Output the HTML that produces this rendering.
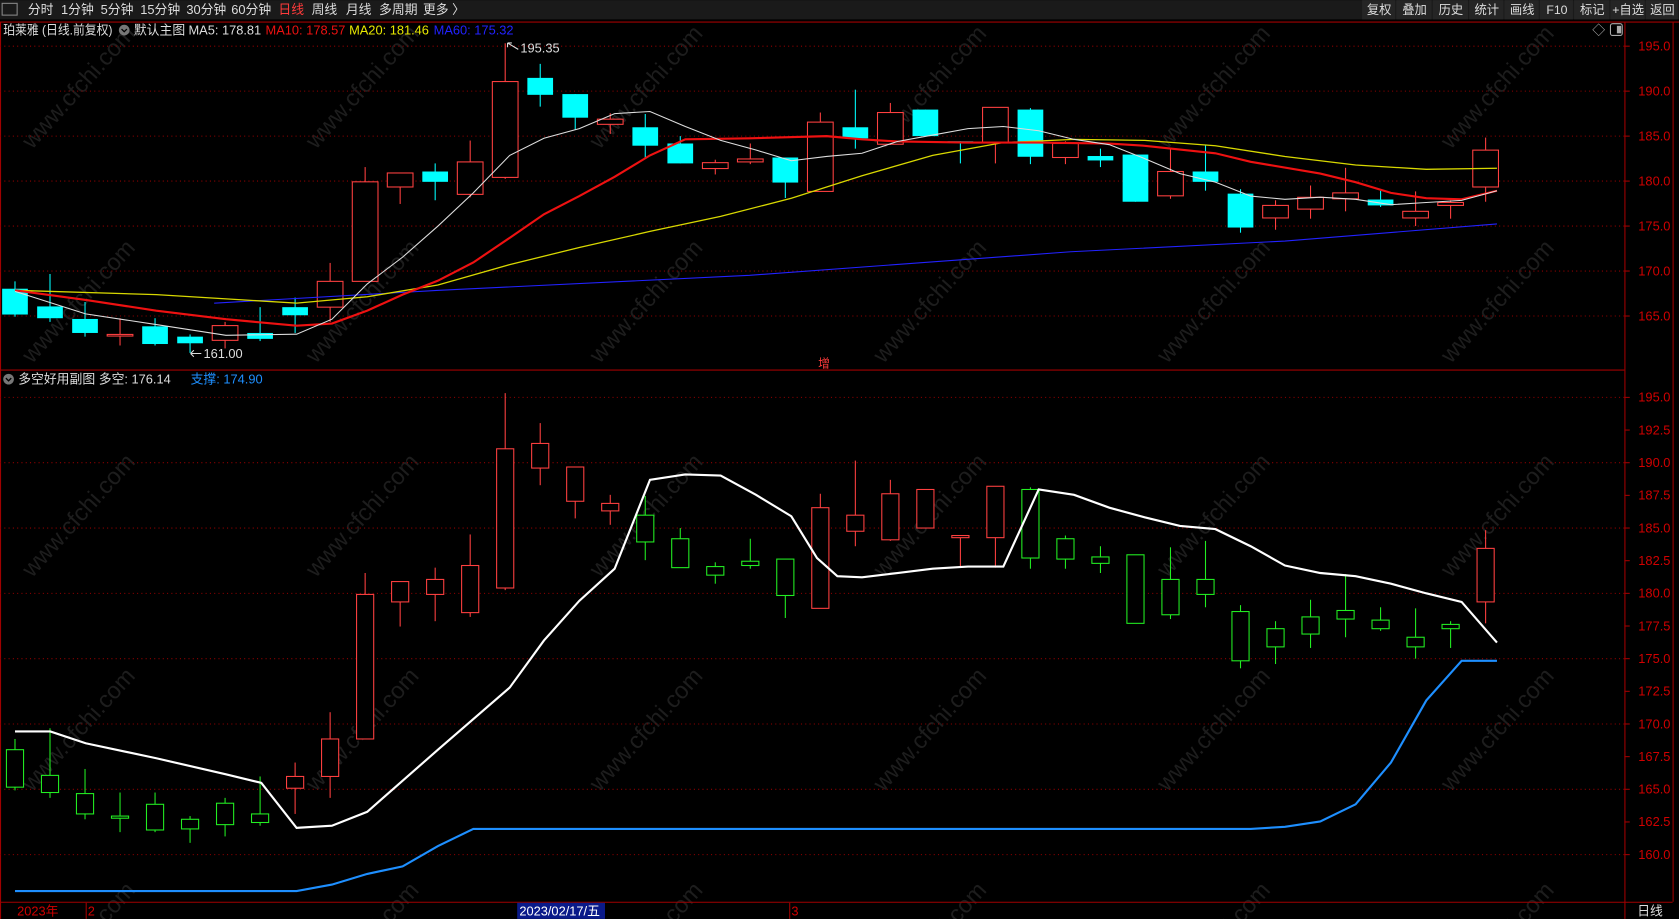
<!DOCTYPE html>
<html><head><meta charset="utf-8"><style>
html,body{margin:0;padding:0;background:#000;width:1679px;height:919px;overflow:hidden}
svg{display:block}
text{font-family:"Liberation Sans","Noto Sans CJK SC",sans-serif}
</style></head><body>
<svg id="s" width="1679" height="919" viewBox="0 0 1568 858" xmlns="http://www.w3.org/2000/svg">
<rect width="1568" height="858" fill="#000"/>
<g id="wm"></g>
<rect x="0" y="0" width="1568" height="18" fill="#1a1a1a"/>
<rect x="2" y="3" width="14" height="11" fill="none" stroke="#888" stroke-width="1"/>
<g font-size="12" fill="#ddd">
<text x="26" y="13">分时</text><text x="57" y="13">1分钟</text><text x="94" y="13">5分钟</text><text x="131" y="13">15分钟</text><text x="174" y="13">30分钟</text><text x="216" y="13">60分钟</text>
<text x="260" y="13" fill="#ff3b3b">日线</text><text x="291" y="13">周线</text><text x="323" y="13">月线</text><text x="354" y="13">多周期</text><text x="395" y="13">更多 〉</text>
</g>
<g id="btns"></g>
<g stroke="#a00000" stroke-width="1" fill="none">
<line x1="0" y1="20.5" x2="1568" y2="20.5"/>
<line x1="0" y1="345.5" x2="1517" y2="345.5"/>
<line x1="0" y1="842.5" x2="1562" y2="842.5"/>
<line x1="1517.5" y1="20" x2="1517.5" y2="858"/>
<line x1="1562.5" y1="20" x2="1562.5" y2="842"/>
<line x1="0.5" y1="20" x2="0.5" y2="858"/>
</g>
<g id="grid"></g>
<g id="main"></g>
<g id="sub"></g>
<polyline fill="none" stroke="#2222ff" stroke-width="1" points="200,283 410,271 700,257 1000,235 1200,225 1398,209"/>
<polyline fill="none" stroke="#d8d800" stroke-width="1.2" points="14,271 146,275 277,283 343,277 409,266 476,247 541,231 607,216 673,202 739,185 805,164 871,145 937,133 1003,130 1069,131 1135,136 1200,146 1266,154 1332,158 1398,157"/>
<polyline fill="none" stroke="#ee1111" stroke-width="2" points="14,271 80,280 146,290 211,298 277,304 310,302 343,290 376,275 409,262 442,245 476,222 508,200 541,183 574,165 607,145 640,130 700,129 772,127 805,130 838,132 904,133 970,133 1036,134 1069,136 1135,143 1168,151 1233,162 1266,170 1299,180 1332,185 1365,186 1398,178"/>
<polyline fill="none" stroke="#ddd" stroke-width="1" points="14,272 80,293 146,303 211,313 277,312 310,298 343,265 376,240 409,211 442,180 476,145 508,129 541,120 574,106 607,104 640,118 673,131 706,140 739,150 772,146 805,143 838,132 871,126 904,120 937,118 970,122 1003,130 1036,135 1069,148 1102,162 1135,170 1168,183 1200,186 1233,184 1266,186 1299,191 1332,189 1365,187 1398,178"/>
<polyline fill="none" stroke="#fff" stroke-width="2" points="14,683 47,683 80,694 146,708 211,723 244,731 277,773 310,771 343,758 409,700 476,642 508,598 541,561 574,531 607,448 640,443 673,444 706,462 739,482 763,521 782,538 805,539 838,535 871,531 904,529 937,529 970,457 1003,462 1036,474 1069,483 1102,491 1135,494 1168,510 1200,528 1233,535 1266,538 1299,545 1332,554 1365,562 1398,600"/>
<polyline fill="none" stroke="#1e8fff" stroke-width="2" points="14,832 277,832 310,826 343,816 376,809 409,790 442,774 1168,774 1200,772 1233,767 1266,751 1299,712 1332,654 1365,617 1398,617"/>
<g font-size="12">
<text x="3" y="32" fill="#ddd" textLength="102" lengthAdjust="spacingAndGlyphs">珀莱雅 (日线.前复权)</text>
<circle cx="116" cy="28" r="5" fill="#777"/><path d="M113.5 27 L116 29.5 L118.5 27" stroke="#000" fill="none" stroke-width="1.2"/>
<text x="125" y="32" fill="#ddd">默认主图</text>
<text x="176" y="32" fill="#ddd">MA5: 178.81</text>
<text x="248" y="32" fill="#ee1111">MA10: 178.57</text>
<text x="326" y="32" fill="#e8e800">MA20: 181.46</text>
<text x="405" y="32" fill="#2222ff">MA60: 175.32</text>
<text x="486" y="49" fill="#ddd">195.35</text><path d="M474 40 L484 46" stroke="#ddd" fill="none"/><path d="M474 40 L478 40 M474 40 L474 44" stroke="#ddd"/>
<text x="190" y="334" fill="#ddd">161.00</text><path d="M178 330 L188 330 M178 330 L181 327 M178 330 L181 333" stroke="#ddd" fill="none"/>
<text x="764" y="343" fill="#ff3b3b" font-size="11">增</text>
<circle cx="8" cy="354" r="5" fill="#777"/><path d="M5.5 353 L8 355.5 L10.5 353" stroke="#000" fill="none" stroke-width="1.2"/>
<text x="17" y="358" fill="#ddd">多空好用副图  多空: 176.14</text>
<text x="178" y="358" fill="#1e8fff">支撑: 174.90</text>
<text x="1487" y="32" fill="#bbb">◇</text>
<rect x="1504" y="22" width="11" height="11" rx="2" fill="none" stroke="#aaa"/><rect x="1510" y="24" width="4" height="7" fill="#aaa"/>
<text x="16" y="855" fill="#d00000">2023年</text>
<line x1="80.5" y1="843" x2="80.5" y2="858" stroke="#a00000"/><text x="82" y="855" fill="#d00000">2</text>
<rect x="483" y="843" width="82" height="15" fill="#0a1a8a"/><text x="485" y="855" fill="#fff">2023/02/17/五</text>
<line x1="737.5" y1="843" x2="737.5" y2="858" stroke="#a00000"/><text x="739" y="855" fill="#d00000">3</text>
<text x="1529" y="855" fill="#ddd">日线</text>
</g>
<g id="axis" font-size="12" fill="#d00000"></g>
</svg>
<script>
var NS="http://www.w3.org/2000/svg";
function el(p,t,a,txt){var e=document.createElementNS(NS,t);for(var k in a)e.setAttribute(k,a[k]);if(txt!=null)e.textContent=txt;document.getElementById(p).appendChild(e);return e;}
for(var r=0;r<5;r++)for(var c=0;c<7;c++){var x=30+c*265, y=140+r*200;
 el("wm","text",{x:x,y:y,fill:"#1d1d1d","font-size":"22",transform:"rotate(-48 "+x+" "+y+")"},"www.cfchi.com");}
var b=["复权","叠加","历史","统计","画线","F10","标记","+自选","返回"],bx=1272;
var bw=[32,34,34,33,33,32,34,33,31];
for(var i=0;i<b.length;i++){el("btns","rect",{x:bx,y:0,width:bw[i]-1,height:18,fill:"#252525"});
 el("btns","text",{x:bx+bw[i]/2,y:13,fill:"#ddd","font-size":"11.5","text-anchor":"middle"},b[i]);bx+=bw[i];}
function my(p){return 43+(195-p)*8.4}function sy(p){return 371+(195-p)*12.2}
for(var p=195;p>=165;p-=5){var y=my(p);el("grid","line",{x1:0,y1:y,x2:1517,y2:y,stroke:"#900000","stroke-dasharray":"1 3"});
 el("axis","line",{x1:1517,y1:y,x2:1522,y2:y,stroke:"#a00000"});el("axis","text",{x:1530,y:y+4},p.toFixed(1));}
for(var p=195;p>=160;p-=2.5){var y=sy(p);if(p%5==0)el("grid","line",{x1:0,y1:y,x2:1517,y2:y,stroke:"#900000","stroke-dasharray":"1 3"});
 el("axis","line",{x1:1517,y1:y,x2:1522,y2:y,stroke:"#a00000"});el("axis","text",{x:1530,y:y+4},p.toFixed(1));}
var d=[[700,735,690,738,"c","g"],[724,740,680,745,"c","g"],[741,760,718,765,"c","g"],[762,764,740,777,"r","g"],[751,775,740,777,"c","g"],[765,774,762,787,"c","g"],[750,770,745,781,"r","g"],[760,768,725,771,"c","g"],[725,736,712,760,"c","r"],[690,725,665,745,"r","r"],
[555,690,535,690,"r","r"],[543,562,543,585,"r","r"],[541,555,530,580,"c","r"],[528,572,499,576,"r","r"],[419,549,367,551,"r","r"],[414,437,395,453,"c","r"],[436,468,436,484,"c","r"],[470,477,462,490,"r","r"],[481,506,463,523,"c","g"],[503,530,493,530,"c","g"],
[529,537,525,545,"r","g"],[524,528,503,531,"r","g"],[522,556,522,577,"c","g"],[474,568,461,568,"r","r"],[481,496,430,510,"c","r"],[461,504,448,505,"r","r"],[457,493,457,493,"c","r"],[500,502,500,530,"c","r"],[454,502,454,530,"r","r"],[457,521,455,531,"c","g"],
[503,522,500,531,"r","g"],[520,526,510,535,"c","g"],[518,582,518,582,"c","g"],[541,574,511,578,"r","g"],[541,555,505,567,"c","g"],[571,617,565,624,"c","g"],[587,604,580,620,"r","g"],[576,592,560,605,"r","g"],[570,578,536,595,"r","g"],[579,587,567,589,"c","g"],
[595,604,568,615,"r","g"],[583,587,580,605,"r","g"],[512,562,495,582,"r","r"]];
var col={r:"#ff4040",c:"#00ffff",g:"#22ee22"};
function m(v){return 43+(v-371)*0.6885}
for(var i=0;i<d.length;i++){var x=14+i*32.7,q=d[i];
 var t=m(q[0]),bo=m(q[1]),h=m(q[2]),l=m(q[3]),cc=col[q[4]];
 el("main","line",{x1:x,y1:h,x2:x,y2:l,stroke:cc});
 if(q[4]=="c")el("main","rect",{x:x-12,y:t,width:24,height:Math.max(bo-t,1.5),fill:cc});
 else el("main","rect",{x:x-12,y:t,width:24,height:Math.max(bo-t,1.5),fill:"#000",stroke:cc});
 cc=col[q[5]];
 el("sub","line",{x1:x,y1:q[2],x2:x,y2:q[3],stroke:cc});
 el("sub","rect",{x:x-8,y:q[0],width:16,height:Math.max(q[1]-q[0],1.5),fill:"#000",stroke:cc});
}
</script>
</body></html>
